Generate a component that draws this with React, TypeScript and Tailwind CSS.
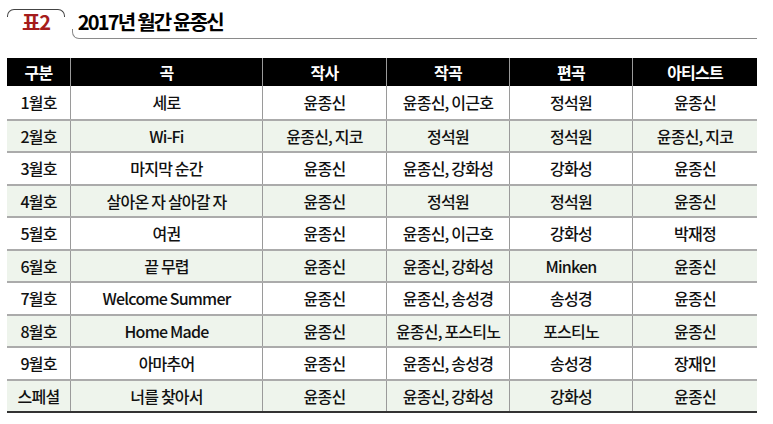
import React from "react";

const rows: string[][] = [
  ["1월호", "세로", "윤종신", "윤종신, 이근호", "정석원", "윤종신"],
  ["2월호", "Wi-Fi", "윤종신, 지코", "정석원", "정석원", "윤종신, 지코"],
  ["3월호", "마지막 순간", "윤종신", "윤종신, 강화성", "강화성", "윤종신"],
  ["4월호", "살아온 자 살아갈 자", "윤종신", "정석원", "정석원", "윤종신"],
  ["5월호", "여권", "윤종신", "윤종신, 이근호", "강화성", "박재정"],
  ["6월호", "끝 무렵", "윤종신", "윤종신, 강화성", "Minken", "윤종신"],
  ["7월호", "Welcome Summer", "윤종신", "윤종신, 송성경", "송성경", "윤종신"],
  ["8월호", "Home Made", "윤종신", "윤종신, 포스티노", "포스티노", "윤종신"],
  ["9월호", "아마추어", "윤종신", "윤종신, 송성경", "송성경", "장재인"],
  ["스페셜", "너를 찾아서", "윤종신", "윤종신, 강화성", "강화성", "윤종신"],
];

const headers = ["구분", "곡", "작사", "작곡", "편곡", "아티스트"];

export default function App() {
  return (
    <div
      className="w-[773px] h-[424px] bg-white text-[#111]"
      style={{ fontFamily: '"Noto Sans CJK KR", "Noto Sans", sans-serif' }}
    >
      {/* Title area */}
      <div className="relative h-[58px]">
        <div className="absolute left-[7px] top-[9px] w-[58px] h-[8px] border-t border-x border-[#444] rounded-t-[7px]" />
        <div className="absolute left-[72px] top-[29px] w-[685px] h-[10px] border-l border-b border-[#8a8a8a] rounded-bl-[7px]" />
        <div className="flex items-center h-[44px] pl-[22px]">
          <span className="text-[20px] font-bold text-[#a51c1c] tracking-[-1.2px] leading-none">
            표2
          </span>
          <span className="ml-[28px] text-[20px] font-bold tracking-[-1.8px] leading-none text-black">
            2017년 월간 윤종신
          </span>
        </div>
      </div>

      {/* Table */}
      <div className="ml-[7px] w-[750px] border-b-2 border-[#333]">
        <div className="grid grid-cols-[63px_192px_124px_123px_123px_125px] h-[28px] bg-black">
          {headers.map((h, i) => (
            <div
              key={h}
              className={`flex items-center justify-center text-white text-[16px] font-bold tracking-[-0.8px] ${
                i > 0 ? "border-l border-[#9a9a9a]" : ""
              }`}
            >
              {h}
            </div>
          ))}
        </div>
        {rows.map((r, ri) => (
          <div
            key={ri}
            className={`grid grid-cols-[63px_192px_124px_123px_123px_125px] h-[32.5px] ${
              ri > 0 ? "border-t-2 border-[#ababab]" : ""
            } ${ri % 2 === 1 ? "bg-[#eef4ec]" : "bg-white"}`}
          >
            {r.map((c, ci) => (
              <div
                key={ci}
                className={`flex items-center justify-center text-[16px] font-medium tracking-[-0.8px] ${
                  ci > 0 ? "border-l border-[#9a9a9a]" : ""
                }`}
              >
                {c}
              </div>
            ))}
          </div>
        ))}
      </div>
    </div>
  );
}
